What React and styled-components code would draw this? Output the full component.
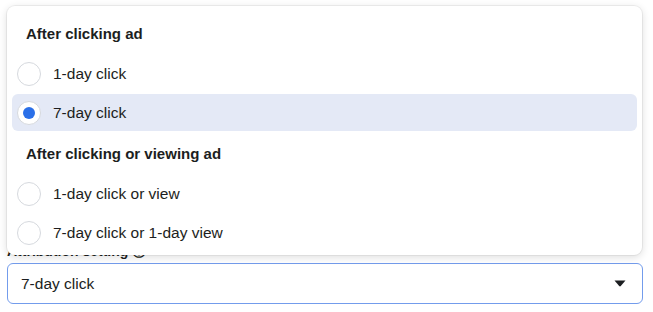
import React, { useState } from 'react';
import styled, { createGlobalStyle } from 'styled-components';

const GlobalStyle = createGlobalStyle`
  html, body {
    margin: 0;
    padding: 0;
    background: #ffffff;
  }
  body {
    font-family: "Liberation Sans", Arial, sans-serif;
    color: #1c1e21;
  }
`;

const groups = [
  {
    title: 'After clicking ad',
    options: ['1-day click', '7-day click'],
  },
  {
    title: 'After clicking or viewing ad',
    options: ['1-day click or view', '7-day click or 1-day view'],
  },
];

const App = () => {
  const [selected, setSelected] = useState('7-day click');

  return (
    <>
      <GlobalStyle />
      <Page>
        <Field>
          <Label>Attribution setting ⓘ</Label>
          <SelectBox>
            <SelectValue>{selected}</SelectValue>
            <Caret width="12" height="7" viewBox="0 0 12 7">
              <path d="M0.5 0.5 H11.5 L6.8 6 Q6 6.8 5.2 6 Z" fill="#1c1e21" />
            </Caret>
          </SelectBox>
        </Field>

        <Menu>
          {groups.map((group) => (
            <React.Fragment key={group.title}>
              <GroupTitle>{group.title}</GroupTitle>
              {group.options.map((opt) => (
                <Option
                  key={opt}
                  $active={opt === selected}
                  onClick={() => setSelected(opt)}
                >
                  <Radio $checked={opt === selected} />
                  <OptionText>{opt}</OptionText>
                </Option>
              ))}
            </React.Fragment>
          ))}
        </Menu>
      </Page>
    </>
  );
};

const Page = styled.div`
  position: relative;
  width: 653px;
  height: 312px;
  box-sizing: border-box;
  padding: 243px 10px 0 7px;
  overflow: hidden;
`;

const Field = styled.div`
  display: flex;
  flex-direction: column;
  gap: 4px;
`;

const Label = styled.div`
  font-size: 14px;
  line-height: 16px;
  font-weight: bold;
  color: #1c1e21;
`;

const SelectBox = styled.div`
  height: 41px;
  box-sizing: border-box;
  border: 1.5px solid #739cec;
  border-radius: 6px;
  display: flex;
  align-items: center;
  justify-content: space-between;
  padding: 0 16px 0 13px;
  background: #fff;
`;

const SelectValue = styled.span`
  font-size: 15.5px;
  color: #1c1e21;
`;

const Caret = styled.svg`
  display: block;
`;

const Menu = styled.div`
  position: absolute;
  top: 6px;
  left: 7px;
  width: 635px;
  height: 249px;
  box-sizing: border-box;
  background: #fff;
  border-radius: 8px;
  box-shadow: 0 0 0 1px rgba(0, 0, 0, 0.05), 0 2px 8px rgba(0, 0, 0, 0.14);
  padding: 7px 5px 4px;
  display: flex;
  flex-direction: column;
  gap: 2px;
  z-index: 2;
`;

const GroupTitle = styled.div`
  height: 40px;
  display: flex;
  align-items: center;
  padding-left: 14px;
  font-size: 15px;
  font-weight: bold;
  color: #1c1e21;
`;

const Option = styled.div`
  height: 37px;
  display: flex;
  align-items: center;
  gap: 12px;
  padding-left: 5px;
  border-radius: 6px;
  background: ${(p) => (p.$active ? '#e4e9f6' : 'transparent')};
  cursor: pointer;
`;

const Radio = styled.span`
  width: 24px;
  height: 24px;
  box-sizing: border-box;
  border-radius: 50%;
  border: 1.5px solid #d6d9de;
  background: #fff;
  display: flex;
  align-items: center;
  justify-content: center;
  flex-shrink: 0;

  &::after {
    content: '';
    width: 12px;
    height: 12px;
    border-radius: 50%;
    background: ${(p) => (p.$checked ? '#2a6fe8' : 'transparent')};
  }
`;

const OptionText = styled.span`
  font-size: 15.5px;
  color: #1c1e21;
`;

export default App;
